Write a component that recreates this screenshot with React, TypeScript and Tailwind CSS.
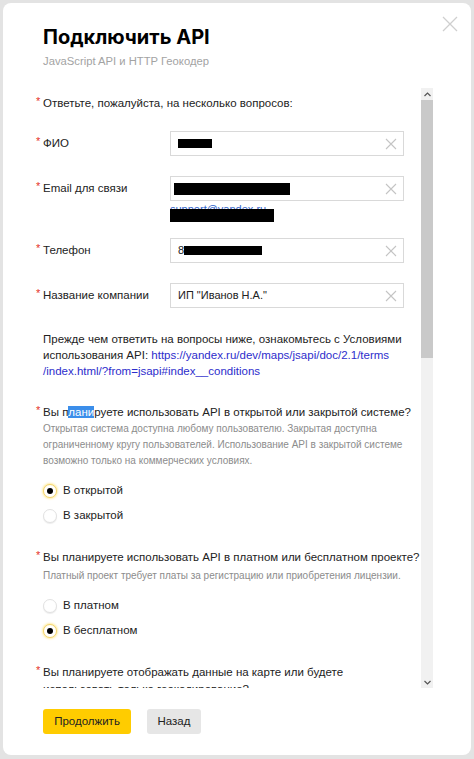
import type { ReactNode } from 'react';

const BODY_FONT = { fontFamily: '"Liberation Sans", Arial, sans-serif' };
const TITLE_FONT = { fontFamily: 'Inter, "Noto Sans", sans-serif' };

function Star() {
  return <span className="absolute -left-[7px] top-[-2px] text-[11px] text-[#e5332a]">*</span>;
}

function ClearIcon() {
  return (
    <svg width="12" height="12" viewBox="0 0 12 12" className="shrink-0">
      <path d="M1 1 L11 11 M11 1 L1 11" stroke="#c4c4c4" strokeWidth="1.1" fill="none" />
    </svg>
  );
}

function Field({ label, children, className = '' }: { label: string; children: ReactNode; className?: string }) {
  return (
    <div className={`flex items-center ${className}`}>
      <div className="relative w-[127px] text-[11.5px] leading-[17px] text-[#222]">
        <Star />
        {label}
      </div>
      <div className="flex h-[25px] w-[234px] items-center border border-[#d9d9d9] pl-[7px] pr-[6px]">
        <div className="flex flex-1 items-center text-[11px] text-[#222]">{children}</div>
        <ClearIcon />
      </div>
    </div>
  );
}

function Radio({ checked, label }: { checked?: boolean; label: string }) {
  return (
    <div className="flex h-[25px] items-center gap-[6px]">
      {checked ? (
        <span className="flex h-[14px] w-[14px] items-center justify-center rounded-full border border-[#f2d36b] bg-white shadow-[0_0_2px_1px_rgba(255,204,0,0.35)]">
          <span className="h-[6px] w-[6px] rounded-full bg-black" />
        </span>
      ) : (
        <span className="h-[14px] w-[14px] rounded-full border border-[#e2e2e2] bg-white shadow-[0_1px_1px_rgba(0,0,0,0.08)]" />
      )}
      <span className="text-[11.5px] text-[#222]">{label}</span>
    </div>
  );
}

function Question({ children, className = '' }: { children: ReactNode; className?: string }) {
  return (
    <div className={`relative text-[11.5px] leading-[17px] text-[#222] ${className}`}>
      <Star />
      {children}
    </div>
  );
}

function Hint({ lines, className = '' }: { lines: string[]; className?: string }) {
  return (
    <div className={`text-[10px] leading-[16px] text-[#8c8c8c] ${className}`}>
      {lines.map((l) => (
        <div key={l}>{l}</div>
      ))}
    </div>
  );
}

export default function App() {
  return (
    <div className="h-screen bg-[#e3e3e3] p-[3px]" style={BODY_FONT}>
      <div className="relative flex h-[752px] flex-col rounded-[8px] bg-white">
        <button type="button" className="absolute right-[13px] top-[13px]">
          <svg width="16" height="16" viewBox="0 0 16 16">
            <path d="M1 1 L15 15 M15 1 L1 15" stroke="#cfcfcf" strokeWidth="1.3" fill="none" />
          </svg>
        </button>

        <div className="pl-[40px] pt-[21px]">
          <h1 className="text-[20px] font-bold leading-[26px] text-black" style={TITLE_FONT}>
            Подключить API
          </h1>
          <p className="mt-[3px] text-[11.25px] leading-[16px] text-[#a3a3a3]">JavaScript API и HTTP Геокодер</p>
        </div>

        <div className="mt-[19px] mr-[38px] flex h-[600px]">
          <div className="flex-1 overflow-hidden pl-[40px] pt-[7px]">
            <Question>Ответьте, пожалуйста, на несколько вопросов:</Question>

            <Field label="ФИО" className="mt-[19px]">
              <span className="h-[9px] w-[34px] bg-black" />
            </Field>

            <Field label="Email для связи" className="mt-[20px]">
              <span className="-ml-[4px] h-[12px] w-[116px] bg-black" />
            </Field>
            <div className="relative ml-[127px] h-[21px] overflow-hidden">
              <span className="absolute left-0 top-[1px] text-[11px] leading-[14px] text-[#3366cc]">support@yandex.ru</span>
              <span className="absolute left-0 top-[8px] h-[13px] w-[104px] bg-black" />
            </div>

            <Field label="Телефон" className="mt-[16px]">
              8<span className="h-[9px] w-[78px] bg-black" />
            </Field>

            <Field label="Название компании" className="mt-[20px]">
              ИП "Иванов Н.А."
            </Field>

            <p className="mt-[23px] text-[11.5px] leading-[16px] text-[#222]">
              Прежде чем ответить на вопросы ниже, ознакомьтесь с Условиями
              <br />
              использования API:{' '}
              <a className="text-[#2d2dcc]">
                https://yandex.ru/dev/maps/jsapi/doc/2.1/terms
                <br />
                /index.html/?from=jsapi#index__conditions
              </a>
            </p>

            <Question className="mt-[25px]">
              Вы п<span className="bg-[#3b8eea] text-white">лани</span>руете использовать API в открытой или закрытой системе?
            </Question>
            <Hint
              lines={[
                'Открытая система доступна любому пользователю. Закрытая доступна',
                'ограниченному кругу пользователей. Использование API в закрытой системе',
                'возможно только на коммерческих условиях.',
              ]}
            />
            <div className="mt-[9px]">
              <Radio checked label="В открытой" />
              <Radio label="В закрытой" />
            </div>

            <Question className="mt-[21px]">Вы планируете использовать API в платном или бесплатном проекте?</Question>
            <Hint className="mt-[2px]" lines={['Платный проект требует платы за регистрацию или приобретения лицензии.']} />
            <div className="mt-[9px]">
              <Radio label="В платном" />
              <Radio checked label="В бесплатном" />
            </div>

            <Question className="mt-[21px]">
              Вы планируете отображать данные на карте или будете
              <br />
              использовать только геокодирование?
            </Question>
          </div>

          <div className="flex w-[12px] flex-col bg-[#f1f1f1]">
            <div className="flex h-[12px] items-center justify-center">
              <svg width="7" height="5" viewBox="0 0 7 5">
                <path d="M0.5 4 L3.5 1 L6.5 4" stroke="#555" strokeWidth="1.2" fill="none" />
              </svg>
            </div>
            <div className="h-[258px] bg-[#c9c9c9]" />
            <div className="flex-1" />
            <div className="flex h-[12px] items-center justify-center">
              <svg width="7" height="5" viewBox="0 0 7 5">
                <path d="M0.5 1 L3.5 4 L6.5 1" stroke="#555" strokeWidth="1.2" fill="none" />
              </svg>
            </div>
          </div>
        </div>

        <div className="flex gap-[16px] pl-[40px] pt-[21px]">
          <button type="button" className="h-[25px] w-[88px] rounded-[3px] bg-[#ffcc00] text-[11.5px] text-[#222]">
            Продолжить
          </button>
          <button type="button" className="h-[25px] w-[54px] rounded-[3px] bg-[#e6e6e6] text-[11.5px] text-[#222]">
            Назад
          </button>
        </div>
      </div>
    </div>
  );
}
